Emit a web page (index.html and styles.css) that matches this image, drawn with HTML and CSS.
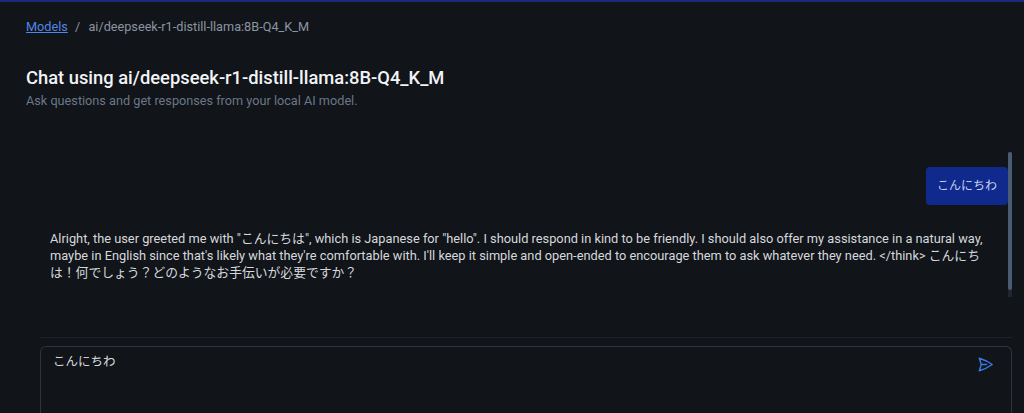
FILE: index.html
```html
<!DOCTYPE html>
<html lang="ja">

<head>
  <meta charset="UTF-8">
  <title>Chat using ai/deepseek-r1-distill-llama:8B-Q4_K_M</title>
  <link rel="stylesheet" href="styles.css">
</head>

<body>
  <header class="page-header">
    <nav class="breadcrumb">
      <a href="#" class="breadcrumb-link">Models</a>
      <span class="breadcrumb-sep">/</span>
      <span class="breadcrumb-current">ai/deepseek-r1-distill-llama:8B-Q4_K_M</span>
    </nav>
    <h1 class="page-title">Chat using ai/deepseek-r1-distill-llama:8B-Q4_K_M</h1>
    <p class="page-subtitle">Ask questions and get responses from your local AI model.</p>
  </header>

  <main class="chat">
    <div class="chat-window">
      <div class="chat-messages">
        <div class="message message-user">こんにちわ</div>
        <div class="message message-assistant">Alright, the user greeted me with "こんにちは", which is Japanese for "hello". I should respond in kind to be friendly. I should also offer my assistance in a natural way, maybe in English since that's likely what they're comfortable with. I'll keep it simple and open-ended to encourage them to ask whatever they need. &lt;/think&gt; こんにちは！何でしょう？どのようなお手伝いが必要ですか？</div>
      </div>
      <div class="scrollbar"><div class="scrollbar-thumb"></div></div>
    </div>

    <form class="chat-form">
      <textarea class="chat-input">こんにちわ</textarea>
      <button type="submit" class="send-button" aria-label="Send">
        <svg viewBox="0 0 24 24" width="17" height="17" fill="none" stroke="currentColor" stroke-width="2" stroke-linecap="round" stroke-linejoin="round">
          <path d="M6 12 3.27 3.13A59.77 59.77 0 0 1 21.49 12 59.77 59.77 0 0 1 3.27 20.88L6 12Zm0 0h7.5" />
        </svg>
      </button>
    </form>
  </main>
</body>

</html>
```

FILE: styles.css
```css
body {
  margin: 0;
  background-color: #111418;
  border-top: 2px solid #1b2a7c;
  color: #d2d6dc;
  font-family: Roboto, "Noto Sans CJK JP", sans-serif;
  height: 411px;
  overflow: hidden;
}

.page-header {
  padding: 16px 26px 0;
}

.breadcrumb {
  font-size: 12.7px;
  line-height: 18px;
  color: #8b95a3;
}

.breadcrumb-link {
  color: #4f86e8;
  text-decoration: underline;
}

.breadcrumb-sep {
  margin: 0 5px 0 4px;
}

.page-title {
  margin: 30px 0 0;
  font-size: 18.35px;
  line-height: 24px;
  font-weight: 500;
  color: #f1f3f6;
}

.page-subtitle {
  margin: 2px 0 0;
  font-size: 12.7px;
  line-height: 18px;
  color: #6b7789;
}

.chat {
  padding: 0 12px 0 40px;
}

.chat-window {
  position: relative;
  margin-top: 42px;
}

.chat-messages {
  height: 145px;
  overflow: hidden;
  padding: 15px 4px 0 10px;
  box-sizing: border-box;
  display: flex;
  flex-direction: column;
}

/* headless browser hides native scrollbars, so draw one */
.scrollbar {
  position: absolute;
  top: 0;
  right: 0;
  width: 4px;
  height: 145px;
  background-color: #22262c;
}

.scrollbar-thumb {
  height: 138px;
  background-color: #4a5b72;
  border-radius: 2px;
}

.message {
  font-size: 12.8px;
  line-height: 17px;
}

.message-user {
  align-self: flex-end;
  background-color: #0f2a8c;
  color: #c7d1ef;
  padding: 10px 11px;
  font-size: 12px;
  line-height: 18px;
  border-radius: 4px;
  margin-bottom: 25px;
}

.message-assistant {
  color: #d5d8dd;
  padding-right: 16px;
  padding-bottom: 30px;
}

.chat-form {
  position: relative;
  margin-top: 40px;
  border-top: 1px solid #1e2227;
  padding-top: 8px;
}

.chat-input {
  display: block;
  width: 100%;
  height: 67px;
  box-sizing: border-box;
  background-color: #111418;
  border: 1px solid #2f343b;
  border-bottom: none;
  border-radius: 6px 6px 0 0;
  padding: 6px 44px 0 12px;
  color: #d5d8dd;
  font-family: Roboto, "Noto Sans CJK JP", sans-serif;
  font-size: 12.5px;
  line-height: 18px;
  resize: none;
  outline: none;
}

.send-button {
  position: absolute;
  top: 18px;
  right: 18px;
  padding: 0;
  background: none;
  border: none;
  color: #3a7be2;
  cursor: pointer;
}
```
